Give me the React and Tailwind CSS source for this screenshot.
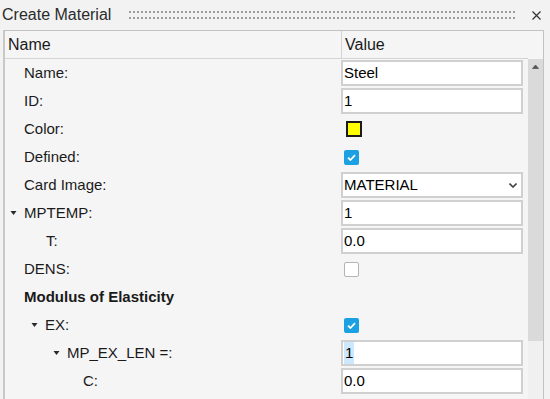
import React from "react";

const font = { fontFamily: '"Liberation Sans", Arial, sans-serif' };

function Tri() {
  return (
    <svg width="7" height="4" viewBox="0 0 7 4" className="block">
      <polygon points="0.5,0 6.5,0 3.5,4" fill="#2a2a2a" />
    </svg>
  );
}

function Check({ checked }) {
  if (!checked)
    return <div className="ml-[3px] w-[15px] h-[15px] rounded-[2px] border border-[#b4b4b4] bg-white" />;
  return (
    <div className="ml-[3px] w-[15px] h-[15px] rounded-[2px] bg-[#1ba1e2] flex items-center justify-center">
      <svg width="9" height="7" viewBox="0 0 9 7">
        <path d="M1 3.6 L3.4 6 L8 1.2" stroke="white" strokeWidth="1.8" fill="none" />
      </svg>
    </div>
  );
}

function Box({ children, select }) {
  return (
    <div className="w-[182px] h-[26px] border-2 border-[#d0d0d0] bg-white flex items-center pl-[1px] pr-[4px] text-[15px] text-black">
      <div className="flex-1 flex items-center">{children}</div>
      {select && (
        <svg width="8" height="5" viewBox="0 0 8 5">
          <path d="M0.5 0.5 L4 4 L7.5 0.5" stroke="#444" strokeWidth="1.6" fill="none" />
        </svg>
      )}
    </div>
  );
}

function Row({ pl, arrow, label, bold, children }) {
  return (
    <div className="h-[28px] flex items-center">
      <div className="w-[336px] flex items-center text-[15px] text-[#1a1a1a]" style={{ paddingLeft: pl }}>
        {arrow && (
          <div className="w-[14px] flex items-center">
            <Tri />
          </div>
        )}
        <span className={bold ? "font-bold" : ""}>{label}</span>
      </div>
      <div className="flex-1 flex items-center">{children}</div>
    </div>
  );
}

export default function App() {
  return (
    <div className="w-[550px] h-[399px] overflow-hidden bg-[#f2f2f2] flex flex-col" style={font}>
      <div className="h-[30px] flex items-center shrink-0">
        <span className="pl-[2px] text-[16px] text-[#2b2b2b] leading-none">Create Material</span>
        <div className="ml-[17px] w-[388px] h-[12px] bg-[radial-gradient(circle,#9c9c9c_0.9px,transparent_1.2px)] bg-[length:4px_6px]" />
        <div className="ml-[16px] w-[9px] h-[9px]">
          <svg width="9" height="9" viewBox="0 0 9 9">
            <path d="M0.5 0.5 L8.5 8.5 M8.5 0.5 L0.5 8.5" stroke="#333" strokeWidth="1.2" />
          </svg>
        </div>
      </div>
      <div className="ml-[3px] w-[541px] flex-1 border-t border-r border-[#c2c2c2] border-l-2 border-l-[#c8c8c8] bg-[#f5f5f5] flex flex-col">
        <div className="h-[28px] flex shrink-0">
          <div className="w-[523px] flex border-b border-[#d4d4d4] text-[16px] text-[#1a1a1a]">
            <div className="w-[336px] pl-[3px] flex items-center">Name</div>
            <div className="flex-1 border-l border-[#d4d4d4] pl-[3px] flex items-center">Value</div>
          </div>
          <div className="flex-1" />
        </div>
        <div className="flex flex-1">
          <div className="w-[523px] flex flex-col">
            <Row pl={19} label="Name:">
              <Box>Steel</Box>
            </Row>
            <Row pl={19} label="ID:">
              <Box>1</Box>
            </Row>
            <Row pl={19} label="Color:">
              <div className="ml-[5px] w-[16px] h-[16px] border-2 border-[#1a1a1a] bg-[#ffff00]" />
            </Row>
            <Row pl={19} label="Defined:">
              <Check checked />
            </Row>
            <Row pl={19} label="Card Image:">
              <Box select>MATERIAL</Box>
            </Row>
            <Row pl={5} arrow label="MPTEMP:">
              <Box>1</Box>
            </Row>
            <Row pl={41} label="T:">
              <Box>0.0</Box>
            </Row>
            <Row pl={19} label="DENS:">
              <Check />
            </Row>
            <Row pl={19} label="Modulus of Elasticity" bold />
            <Row pl={26} arrow label="EX:">
              <Check checked />
            </Row>
            <Row pl={48} arrow label="MP_EX_LEN =:">
              <Box>
                <span className="bg-[#cce8ff] px-[1px]">1</span>
              </Box>
            </Row>
            <Row pl={78} label="C:">
              <Box>0.0</Box>
            </Row>
          </div>
          <div className="w-[15px] flex flex-col">
            <div className="h-[282px] bg-[#dadada] flex justify-center pt-[5px]">
              <svg width="7" height="5" viewBox="0 0 7 5">
                <path d="M0.5 4.5 L3.5 1 L6.5 4.5 Z" fill="#555" stroke="#555" strokeWidth="0.8" />
              </svg>
            </div>
            <div className="flex-1 bg-[#f0f0f0]" />
          </div>
        </div>
      </div>
    </div>
  );
}
